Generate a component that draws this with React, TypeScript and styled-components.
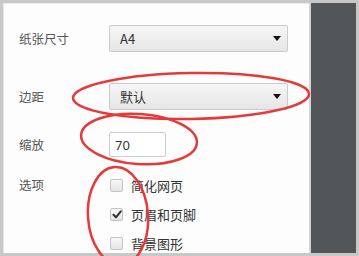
import React from "react";
import styled, { createGlobalStyle } from "styled-components";

const Global = createGlobalStyle`
  html, body { margin: 0; padding: 0; background: #c9c9c9; }
  body { font-family: "Noto Sans CJK SC", "Noto Sans", sans-serif; }
`;

const Frame = styled.div`
  position: relative;
  width: 359px;
  height: 256px;
  box-sizing: border-box;
  padding: 3px 3px 3px 3px;
  background: #c8c8c8;
  display: flex;
  overflow: hidden;
`;

const Main = styled.div`
  flex: 1;
  background: #fdfdfd;
  border-left: 1px solid #e6e6e6;
  border-top: 1px solid #ececec;
  padding: 21px 0 0 15px;
  display: flex;
  flex-direction: column;
`;

const Separator = styled.div`
  width: 2px;
  background: #d4d4d4;
`;

const Dark = styled.div`
  width: 45px;
  background: #535658;
`;

const Row = styled.div<{ $mt?: number; $align?: string }>`
  display: flex;
  align-items: ${(p) => p.$align || "center"};
  margin-top: ${(p) => p.$mt || 0}px;
`;

const Label = styled.div`
  width: 90px;
  font-size: 12.5px;
  color: #555;
  line-height: 16px;
`;

const Select = styled.div`
  width: 179px;
  height: 27px;
  box-sizing: border-box;
  border: 1px solid #cbcbcb;
  border-radius: 2px;
  background: linear-gradient(#f6f6f6, #e6e6e6);
  display: flex;
  align-items: center;
  justify-content: space-between;
  padding: 0 6px 0 10px;
  font-size: 13px;
  color: #333;
`;

const Arrow = styled.span`
  width: 0;
  height: 0;
  border-left: 4px solid transparent;
  border-right: 4px solid transparent;
  border-top: 5px solid #111;
  margin-right: 0px;
`;

const Input = styled.div`
  width: 57px;
  height: 25px;
  box-sizing: border-box;
  border: 1px solid #cdcdcd;
  border-radius: 2px;
  background: #fff;
  display: flex;
  align-items: center;
  padding-left: 5px;
  font-size: 13px;
  color: #333;
  font-family: "Noto Sans", sans-serif;
`;

const Options = styled.div`
  display: flex;
  flex-direction: column;
  gap: 16px;
`;

const Option = styled.div`
  display: flex;
  align-items: center;
  gap: 8px;
  font-size: 13px;
  color: #333;
  height: 13px;
`;

const Box = styled.span`
  width: 13px;
  height: 13px;
  box-sizing: border-box;
  border: 1px solid #c4c4c4;
  border-radius: 2px;
  background: linear-gradient(#f8f8f8, #e4e4e4);
  display: flex;
  align-items: center;
  justify-content: center;
  margin-left: 1px;
`;

const Overlay = styled.svg`
  position: absolute;
  left: 0;
  top: 0;
  pointer-events: none;
`;

function Check({ checked }: { checked?: boolean }) {
  return (
    <Box>
      {checked && (
        <svg width="10" height="9" viewBox="0 0 10 9">
          <path d="M1.5 4.8 L4 7.3 L8.8 1.3" fill="none" stroke="#333" strokeWidth="2" strokeLinecap="round" strokeLinejoin="round" />
        </svg>
      )}
    </Box>
  );
}

export default function App() {
  return (
    <>
      <Global />
      <Frame>
        <Main>
          <Row>
            <Label>纸张尺寸</Label>
            <Select>
              <span>A4</span>
              <Arrow />
            </Select>
          </Row>
          <Row $mt={31}>
            <Label>边距</Label>
            <Select>
              <span>默认</span>
              <Arrow />
            </Select>
          </Row>
          <Row $mt={22}>
            <Label>缩放</Label>
            <Input>70</Input>
          </Row>
          <Row $mt={22} $align="flex-start">
            <Label style={{ marginTop: -2 }}>选项</Label>
            <Options>
              <Option>
                <Check />
                简化网页
              </Option>
              <Option>
                <Check checked />
                页眉和页脚
              </Option>
              <Option>
                <Check />
                背景图形
              </Option>
            </Options>
          </Row>
        </Main>
        <Separator />
        <Dark />
        <Overlay width="359" height="256" viewBox="0 0 359 256">
          <g fill="none" stroke="#e53a3a" strokeWidth="2.5">
            <ellipse cx="191" cy="96" rx="118" ry="23" transform="rotate(-1 191 96)" />
            <ellipse cx="139" cy="139" rx="58" ry="25" transform="rotate(4 139 139)" />
            <ellipse cx="118" cy="216" rx="30" ry="49" transform="rotate(-4 118 216)" />
          </g>
        </Overlay>
      </Frame>
    </>
  );
}
